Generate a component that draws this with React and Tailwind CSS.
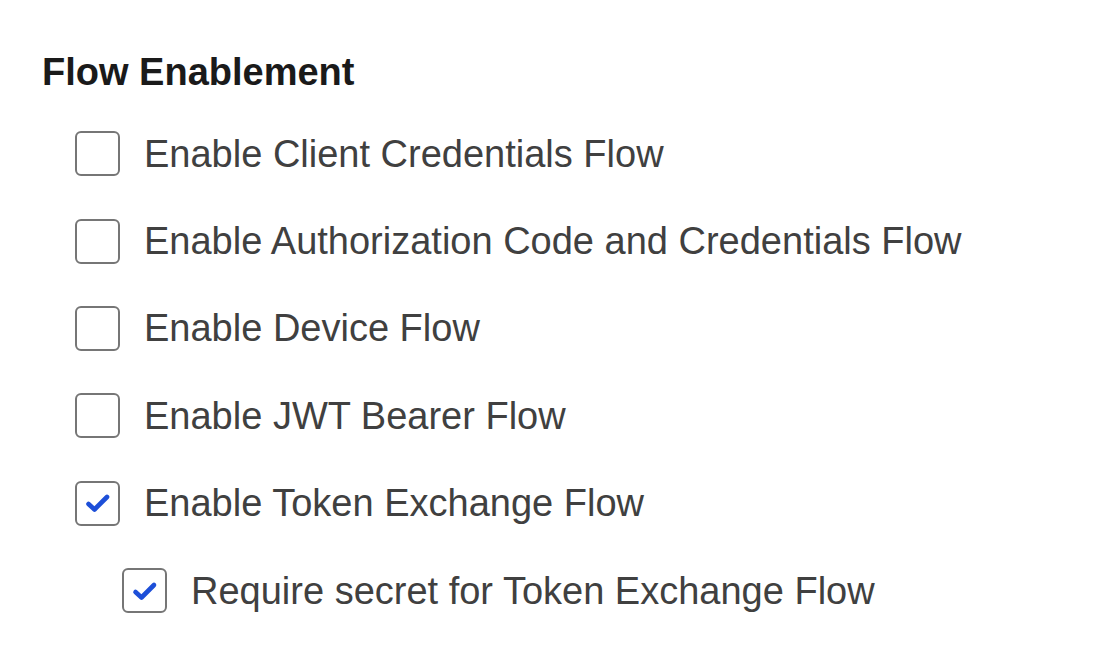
const flows = [
  { label: "Enable Client Credentials Flow", checked: false, nested: false },
  { label: "Enable Authorization Code and Credentials Flow", checked: false, nested: false },
  { label: "Enable Device Flow", checked: false, nested: false },
  { label: "Enable JWT Bearer Flow", checked: false, nested: false },
  { label: "Enable Token Exchange Flow", checked: true, nested: false },
  { label: "Require secret for Token Exchange Flow", checked: true, nested: true },
];

function Box({ checked }) {
  return (
    <span className="flex h-[45px] w-[45px] shrink-0 items-center justify-center rounded-[6px] border-[2.5px] border-[#767676] bg-white">
      {checked && (
        <svg width="40" height="40" viewBox="2.5 2.5 40 40" fill="none">
          <path
            d="M13 23.5 L19 29 L31.5 16.5"
            stroke="#1d4fd8"
            strokeWidth="4.6"
            strokeLinecap="round"
            strokeLinejoin="round"
          />
        </svg>
      )}
    </span>
  );
}

export default function App() {
  return (
    <div className="min-h-[658px] w-full bg-white pl-[42px] pt-[50px] font-['Liberation_Sans',Arial,sans-serif]">
      <h2 className="text-[38px] font-bold leading-[44px] text-[#1a1a1a]">Flow Enablement</h2>
      <div className="mt-[16px] flex flex-col">
        {flows.map((f) => (
          <label
            key={f.label}
            className={`flex h-[87.4px] items-center gap-[24px] ${f.nested ? "pl-[80px]" : "pl-[33px]"}`}
          >
            <Box checked={f.checked} />
            <span className="text-[38px] leading-none text-[#404040]">{f.label}</span>
          </label>
        ))}
      </div>
    </div>
  );
}
